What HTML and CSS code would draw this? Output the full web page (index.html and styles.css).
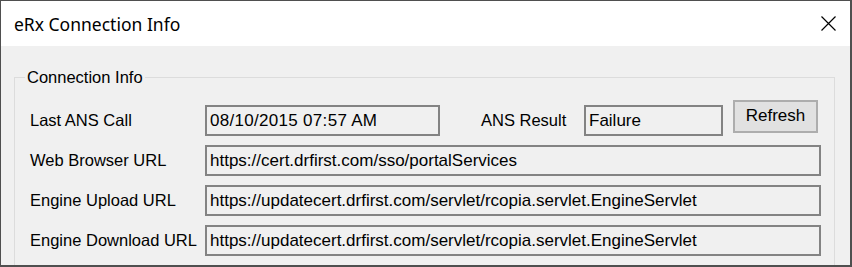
FILE: index.html
```html
<!DOCTYPE html>
<html lang="en">
<head>
    <meta charset="UTF-8">
    <meta name="viewport" content="width=device-width, initial-scale=1.0">
    <title>eRx Connection Info</title>
    <link rel="stylesheet" href="styles.css">
</head>
<body>

<div class="window">
    <div class="titlebar">
        <span class="title">eRx Connection Info</span>
        <svg class="close" width="15" height="15" viewBox="0 0 15 15">
            <path d="M0.5 0.5 L14.5 14.5 M14.5 0.5 L0.5 14.5" stroke="#000" stroke-width="1.2" fill="none"/>
        </svg>
    </div>

    <div class="client">
        <fieldset class="group">
            <legend>Connection Info</legend>
            <div class="rows">
                <div class="row">
                    <span class="label">Last ANS Call</span>
                    <div class="field date">08/10/2015 07:57 AM</div>
                    <span class="label result-label">ANS Result</span>
                    <div class="field result">Failure</div>
                    <button class="refresh">Refresh</button>
                </div>
                <div class="row">
                    <span class="label">Web Browser URL</span>
                    <div class="field wide">https://cert.drfirst.com/sso/portalServices</div>
                </div>
                <div class="row">
                    <span class="label">Engine Upload URL</span>
                    <div class="field wide">https://updatecert.drfirst.com/servlet/rcopia.servlet.EngineServlet</div>
                </div>
                <div class="row">
                    <span class="label">Engine Download URL</span>
                    <div class="field wide">https://updatecert.drfirst.com/servlet/rcopia.servlet.EngineServlet</div>
                </div>
            </div>
        </fieldset>
    </div>
</div>

</body>
</html>
```

FILE: styles.css
```css
body {
    margin: 0;
    background: #fff;
    font-family: "Liberation Sans", Arial, sans-serif;
}

.window {
    width: 852px;
    height: 267px;
    box-sizing: border-box;
    border: 1px solid #4f4f4f;
    border-right-width: 2px;
    border-bottom-width: 2px;
    background: #f0f0f0;
    overflow: hidden;
}

.titlebar {
    height: 45px;
    background: #fff;
    display: flex;
    align-items: center;
    justify-content: space-between;
    padding: 0 14px 0 13px;
}

.title {
    font-family: "Noto Sans", sans-serif;
    font-size: 17.5px;
    color: #000;
}

.close {
    display: block;
}

.client {
    padding-top: 1px;
}

.group {
    width: 821px;
    height: 240px;
    box-sizing: border-box;
    margin: 20px 0 0 13px;
    padding: 0;
    border: 1px solid #dcdcdc;
}

.group legend {
    margin-left: 10px;
    padding: 0 2px;
    font-size: 16.5px;
    line-height: 20px;
    color: #000;
}

.rows {
    padding: 18px 0 0 15px;
    display: flex;
    flex-direction: column;
    gap: 9px;
}

.row {
    display: flex;
    align-items: center;
    height: 31px;
}

.label {
    width: 175px;
    font-size: 16.5px;
    color: #000;
    white-space: nowrap;
}

.field {
    height: 31px;
    box-sizing: border-box;
    border: 2px solid #838383;
    background: #f0f0f0;
    padding-left: 3px;
    font-size: 17px;
    line-height: 27px;
    color: #000;
    white-space: nowrap;
    overflow: hidden;
}

.date {
    width: 235px;
    letter-spacing: 0.3px;
}

.result-label {
    width: 103px;
    margin-left: 41px;
}

.result {
    width: 139px;
}

.refresh {
    width: 85px;
    height: 33px;
    margin: 0 0 9px 10px;
    border: 2px solid #adadad;
    background: #e1e1e1;
    font-family: "Liberation Sans", Arial, sans-serif;
    font-size: 17px;
    color: #000;
    padding: 0;
}

.wide {
    width: 616px;
}
```
